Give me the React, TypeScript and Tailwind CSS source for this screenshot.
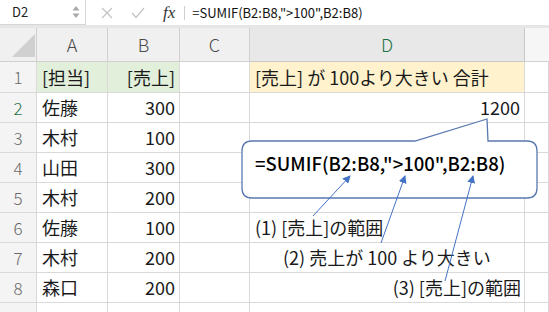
import React from 'react';

const font = { fontFamily: '"Noto Sans CJK JP", "Noto Sans", sans-serif' };

const rows: { n: number; a: string; b: string }[] = [
  { n: 2, a: '佐藤', b: '300' },
  { n: 3, a: '木村', b: '100' },
  { n: 4, a: '山田', b: '300' },
  { n: 5, a: '木村', b: '200' },
  { n: 6, a: '佐藤', b: '100' },
  { n: 7, a: '木村', b: '200' },
  { n: 8, a: '森口', b: '200' },
];

function Toolbar() {
  return (
    <div className="flex h-[28px] items-stretch border-b-[3px] border-[#e6e6e6] bg-white">
      {/* name box */}
      <div className="flex w-[86px] items-center justify-between border-r border-b border-[#d6d6d6] pl-[12px] pr-[4px] text-[13px] text-[#222]">
        <span>D2</span>
        <svg width="10" height="16" viewBox="0 0 10 16">
          <path d="M5 2 L8.5 6.5 L1.5 6.5 Z" fill="#a8a8a8" />
          <path d="M5 14 L8.5 9.5 L1.5 9.5 Z" fill="#a8a8a8" />
        </svg>
      </div>
      <div className="flex items-center">
        <svg className="ml-[15px]" width="12" height="12" viewBox="0 0 12 12">
          <path d="M1 1 L11 11 M11 1 L1 11" stroke="#c4c4c4" strokeWidth="1.3" />
        </svg>
        <svg className="ml-[18px]" width="14" height="12" viewBox="0 0 14 12">
          <path d="M1 6 L5 10.5 L13 1" stroke="#c4c4c4" strokeWidth="1.3" fill="none" />
        </svg>
        <span
          className="ml-[18px] text-[17px] italic text-[#333]"
          style={{ fontFamily: '"Liberation Serif", serif' }}
        >
          fx
        </span>
        <div className="ml-[9px] h-[14px] w-px bg-[#cfcfcf]" />
        <span className="ml-[7px] text-[13px] text-[#111]">=SUMIF(B2:B8,"&gt;100",B2:B8)</span>
      </div>
    </div>
  );
}

function Cell({
  className = '',
  children,
}: {
  className?: string;
  children?: React.ReactNode;
}) {
  return (
    <div className={`flex items-center whitespace-nowrap border-r border-b border-[#d9d9d9] text-[18px] text-[#1a1a1a] ${className}`}>
      {children}
    </div>
  );
}

function RowNum({ n, active }: { n: number; active?: boolean }) {
  return (
    <div
      className={`flex items-center justify-center border-r border-b border-[#d9d9d9] bg-[#f4f4f4] text-[17px] font-light ${
        active ? 'text-[#1e7145]' : 'text-[#6a6a6a]'
      }`}
    >
      {n}
    </div>
  );
}

function Overlay() {
  return (
    <svg className="pointer-events-none absolute left-0 top-0" width="549" height="312">
      <defs>
        <marker id="ah" markerWidth="8" markerHeight="8" refX="7" refY="4" orient="auto" markerUnits="userSpaceOnUse">
          <path d="M0 0 L8 4 L0 8 Z" fill="#4472c4" />
        </marker>
      </defs>
      <path
        d="M252 141 L415 141 L487 119 L488 141 L527 141 Q537 141 537 151 L537 188 Q537 198 527 198 L252 198 Q242 198 242 188 L242 151 Q242 141 252 141 Z"
        fill="white"
        stroke="#5a78b0"
        strokeWidth="1.3"
      />
      <line x1="313" y1="216" x2="350" y2="176" stroke="#4472c4" strokeWidth="1" markerEnd="url(#ah)" />
      <line x1="381" y1="243" x2="405" y2="176" stroke="#4472c4" strokeWidth="1" markerEnd="url(#ah)" />
      <line x1="445" y1="281" x2="473" y2="176" stroke="#4472c4" strokeWidth="1" markerEnd="url(#ah)" />
    </svg>
  );
}

export default function App() {
  return (
    <div className="relative h-[312px] w-[549px] overflow-hidden bg-white" style={font}>
      <Toolbar />
      <div className="grid grid-cols-[37px_71px_72px_70px_275px_1fr] grid-rows-[34px_31px_repeat(7,30px)_30px]">
        {/* header row */}
        <div className="relative border-r border-b border-[#d0d0d0] bg-[#f0f0f0]">
          <svg className="absolute left-[12px] top-[5px]" width="24" height="24" viewBox="0 0 24 24">
            <path d="M0 24 L23 24 L23 1 Z" fill="#d0d0d0" />
          </svg>
        </div>
        {['A', 'B', 'C'].map((c) => (
          <div
            key={c}
            className="flex items-center justify-center border-r border-b border-[#d0d0d0] bg-[#f0f0f0] text-[18px] font-light text-[#4a4a4a]"
          >
            {c}
          </div>
        ))}
        <div className="flex items-center justify-center border-r border-b border-[#c8c8c8] bg-[#e8e8e8] text-[18px] font-light text-[#1e7145]">
          D
        </div>
        <div className="border-b border-[#d0d0d0] bg-[#f6f6f6]" />

        {/* row 1 */}
        <RowNum n={1} />
        <Cell className="bg-[#e2efda] pl-[5px]">[担当]</Cell>
        <Cell className="justify-end bg-[#e2efda] pr-[4px]">[売上]</Cell>
        <Cell />
        <Cell className="bg-[#fff2cc] pl-[5px]">[売上] が 100より大きい 合計</Cell>
        <Cell />

        {rows.map((r) => (
          <React.Fragment key={r.n}>
            <RowNum n={r.n} active={r.n === 2} />
            <Cell className="pl-[5px]">{r.a}</Cell>
            <Cell className="justify-end pr-[4px]">{r.b}</Cell>
            <Cell />
            {r.n === 2 && <Cell className="justify-end pr-[4px]">1200</Cell>}
            {r.n === 6 && <Cell className="pl-[5px] text-[17px]">(1) [売上]の範囲</Cell>}
            {r.n === 7 && <Cell className="pl-[33px] text-[17px]">(2) 売上が 100 より大きい</Cell>}
            {r.n === 8 && <Cell className="justify-end pr-[3px] text-[17px]">(3) [売上]の範囲</Cell>}
            {(r.n < 6 && r.n !== 2) && <Cell />}
            <Cell />
          </React.Fragment>
        ))}

        {/* row 9 */}
        <RowNum n={9} />
        <Cell />
        <Cell />
        <Cell />
        <Cell />
        <Cell />
      </div>
      <Overlay />
      <div className="absolute left-[255px] top-[150px] text-[18.5px] font-medium leading-[26px] text-black">
        =SUMIF(B2:B8,"&gt;100",B2:B8)
      </div>
    </div>
  );
}
